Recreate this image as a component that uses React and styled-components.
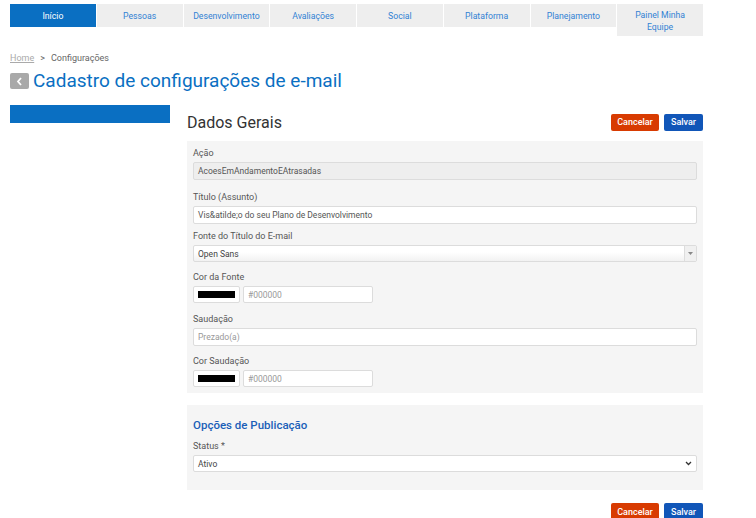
import React from 'react';
import styled, { createGlobalStyle } from 'styled-components';

const GlobalStyle = createGlobalStyle`
  body {
    margin: 0;
    background: #fff;
    font-family: Roboto, 'Liberation Sans', sans-serif;
  }
`;

const Page = styled.div`
  width: 693px;
  padding: 4px 10px 0;
`;

const Nav = styled.nav`
  display: grid;
  grid-template-columns: repeat(8, 1fr);
  gap: 1px;
  align-items: start;
`;

const Tab = styled.a`
  display: flex;
  align-items: center;
  justify-content: center;
  text-align: center;
  min-height: 23px;
  padding: ${({ $tall }) => ($tall ? '5px 4px 3px' : '0 4px')};
  box-sizing: border-box;
  background: ${({ $active }) => ($active ? '#0a6fc2' : '#eeeeee')};
  color: ${({ $active }) => ($active ? '#fff' : '#3282d4')};
  font-size: 8.7px;
  line-height: 12px;
  cursor: pointer;
`;

const Breadcrumb = styled.div`
  margin-top: 16px;
  font-size: 9px;
  line-height: 12px;
  color: #666;
  display: flex;
  gap: 6px;
`;

const Crumb = styled.span`
  color: ${({ $link }) => ($link ? '#aaa' : '#666')};
  text-decoration: ${({ $link }) => ($link ? 'underline' : 'none')};
`;

const TitleRow = styled.div`
  margin-top: 5px;
  display: flex;
  align-items: center;
  gap: 4px;
`;

const BackButton = styled.button`
  width: 19px;
  height: 16px;
  border: none;
  border-radius: 2px;
  background: #a9a9a9;
  display: flex;
  align-items: center;
  justify-content: center;
  padding: 0;
`;

const PageTitle = styled.h1`
  margin: 0;
  font-size: 19px;
  font-weight: 400;
  line-height: 24px;
  color: #0a6fc2;
`;

const Body = styled.div`
  margin-top: 11px;
  display: grid;
  grid-template-columns: 160px 1fr;
  gap: 17px;
`;

const SideBar = styled.div`
  height: 18px;
  background: #0a6fc2;
  margin-top: 1px;
`;

const Main = styled.div`
  display: flex;
  flex-direction: column;
`;

const Header = styled.div`
  display: flex;
  justify-content: space-between;
  align-items: center;
  margin-top: 8px;
  height: 20px;
`;

const SectionTitle = styled.h2`
  margin: 0;
  font-size: 16px;
  font-weight: 400;
  color: #333;
`;

const Actions = styled.div`
  display: flex;
  justify-content: flex-end;
  gap: 5px;
  margin-top: ${({ $top }) => $top || 0}px;
`;

const Button = styled.button`
  height: 17px;
  width: ${({ $width }) => $width}px;
  padding: 0;
  border: none;
  border-radius: 2px;
  background: ${({ $variant }) => ($variant === 'cancel' ? '#d83b01' : '#1156b8')};
  color: #fff;
  font-family: inherit;
  font-size: 9px;
  font-weight: 500;
`;

const Panel = styled.div`
  background: #f5f5f5;
  padding: ${({ $pad }) => $pad};
  margin-top: ${({ $top }) => $top}px;
`;

const Field = styled.div`
  margin-top: ${({ $top }) => $top || 0}px;
`;

const Label = styled.label`
  display: block;
  font-size: 9px;
  line-height: 12px;
  color: #555;
  margin-bottom: 3px;
`;

const Input = styled.div`
  height: ${({ $h }) => $h || 18}px;
  box-sizing: border-box;
  border: 1px solid #dcdcdc;
  border-radius: 2px;
  background: ${({ $disabled }) => ($disabled ? '#eeeeee' : '#fff')};
  font-size: 8.5px;
  color: ${({ $placeholder }) => ($placeholder ? '#999' : '#555')};
  padding: 0 4px;
  display: flex;
  align-items: center;
  width: ${({ $width }) => ($width ? `${$width}px` : 'auto')};
`;

const SelectBox = styled(Input)`
  justify-content: space-between;
  padding-right: 0;
  color: #444;
  background: ${({ $grad }) => ($grad ? 'linear-gradient(#fff 40%, #f2f2f2)' : '#fff')};
`;

const Arrow = styled.span`
  width: 11px;
  height: 100%;
  border-left: 1px solid #ddd;
  display: flex;
  align-items: center;
  justify-content: center;
  background: #f0f0f0;
`;

const ColorRow = styled.div`
  display: flex;
  gap: 3px;
`;

const Swatch = styled.div`
  width: 47px;
  height: 17px;
  box-sizing: border-box;
  border: 1px solid #dcdcdc;
  border-radius: 2px;
  background: #fff;
  padding: 4px;
`;

const SwatchFill = styled.div`
  height: 100%;
  background: #000;
`;

const SubTitle = styled.h3`
  margin: 0 0 7px;
  font-size: 11.5px;
  font-weight: 500;
  line-height: 16px;
  color: #1b5fb8;
`;

const Chevron = styled.span`
  margin-right: 4px;
  display: flex;
`;

const ColorField = ({ top, label }) => (
  <Field $top={top}>
    <Label>{label}</Label>
    <ColorRow>
      <Swatch>
        <SwatchFill />
      </Swatch>
      <Input $width={130} $h={17} $placeholder>
        #000000
      </Input>
    </ColorRow>
  </Field>
);

const tabs = [
  'Início',
  'Pessoas',
  'Desenvolvimento',
  'Avaliações',
  'Social',
  'Plataforma',
  'Planejamento',
  'Painel Minha Equipe',
];

const App = () => (
  <>
    <GlobalStyle />
    <Page>
      <Nav>
        {tabs.map((t, i) => (
          <Tab key={t} $active={i === 0} $tall={i === 7}>
            {i === 7 ? (
              <span>
                Painel Minha
                <br />
                Equipe
              </span>
            ) : (
              t
            )}
          </Tab>
        ))}
      </Nav>

      <Breadcrumb>
        <Crumb $link>Home</Crumb>
        <Crumb>&gt;</Crumb>
        <Crumb>Configurações</Crumb>
      </Breadcrumb>

      <TitleRow>
        <BackButton>
          <svg width="7" height="9" viewBox="0 0 7 9">
            <path d="M5 1 L2 4.5 L5 8" stroke="#fff" strokeWidth="1.8" fill="none" />
          </svg>
        </BackButton>
        <PageTitle>Cadastro de configurações de e-mail</PageTitle>
      </TitleRow>

      <Body>
        <SideBar />
        <Main>
          <Header>
            <SectionTitle>Dados Gerais</SectionTitle>
            <Actions>
              <Button $variant="cancel" $width={48}>Cancelar</Button>
              <Button $width={39}>Salvar</Button>
            </Actions>
          </Header>

          <Panel $pad="6px" $top={9}>
            <Field>
              <Label>Ação</Label>
              <Input $disabled>AcoesEmAndamentoEAtrasadas</Input>
            </Field>
            <Field $top={11}>
              <Label>Título (Assunto)</Label>
              <Input>Vis&amp;atilde;o do seu Plano de Desenvolvimento</Input>
            </Field>
            <Field $top={6}>
              <Label>Fonte do Título do E-mail</Label>
              <SelectBox $grad $h={17}>
                Open Sans
                <Arrow>
                  <svg width="5" height="3" viewBox="0 0 5 3">
                    <path d="M0 0 H5 L2.5 3 Z" fill="#888" />
                  </svg>
                </Arrow>
              </SelectBox>
            </Field>
            <ColorField top={9} label="Cor da Fonte" />
            <Field $top={10}>
              <Label>Saudação</Label>
              <Input $placeholder>Prezado(a)</Input>
            </Field>
            <ColorField top={9} label="Cor Saudação" />
          </Panel>

          <Panel $pad="12px 6px 18px" $top={12}>
            <SubTitle>Opções de Publicação</SubTitle>
            <Field>
              <Label>Status *</Label>
              <SelectBox $h={17}>
                Ativo
                <Chevron>
                  <svg width="7" height="5" viewBox="0 0 7 5">
                    <path d="M1 1 L3.5 3.5 L6 1" stroke="#333" strokeWidth="1.3" fill="none" />
                  </svg>
                </Chevron>
              </SelectBox>
            </Field>
          </Panel>

          <Actions $top={13}>
            <Button $variant="cancel" $width={48}>Cancelar</Button>
            <Button $width={39}>Salvar</Button>
          </Actions>
        </Main>
      </Body>
    </Page>
  </>
);

export default App;
